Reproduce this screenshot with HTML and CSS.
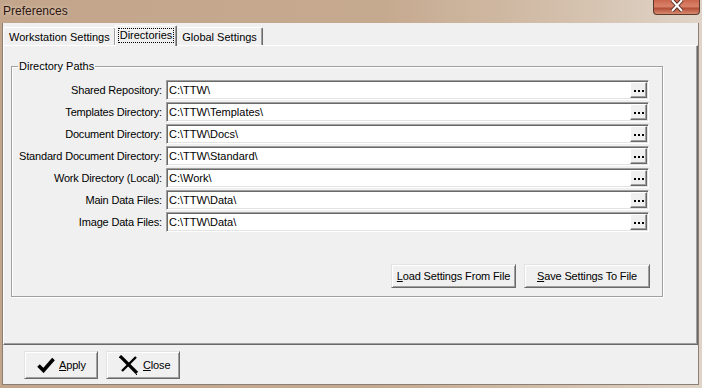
FILE: index.html
```html
<!DOCTYPE html>
<html lang="en">

<head>
    <meta charset="UTF-8">
    <title>Preferences</title>
    <link rel="stylesheet" href="styles.css">
</head>

<body>
    <div class="window">
        <div class="titlebar">
            <span class="title">Preferences</span>
            <div class="close-btn">
                <svg width="16" height="12" viewBox="0 0 16 12">
                    <path d="M3 0 L13 11 M13 0 L3 11" stroke="#5a3326" stroke-width="4" />
                    <path d="M3 0 L13 11 M13 0 L3 11" stroke="#fff" stroke-width="2" />
                </svg>
            </div>
        </div>

        <div class="client">
            <div class="tabs">
                <div class="tab">Workstation Settings</div>
                <div class="tab active"><span class="focus">Directories</span></div>
                <div class="tab">Global Settings</div>
            </div>

            <div class="page">
                <fieldset class="group">
                    <legend>Directory Paths</legend>

                    <div class="fields">
                        <label>Shared Repository:</label>
                        <div class="path-box"><input class="path" value="C:\TTW\"><button class="browse"><svg width="10" height="2"><rect x="0" width="2" height="2" /><rect x="4" width="2" height="2" /><rect x="8" width="2" height="2" /></svg></button></div>

                        <label>Templates Directory:</label>
                        <div class="path-box"><input class="path" value="C:\TTW\Templates\"><button class="browse"><svg width="10" height="2"><rect x="0" width="2" height="2" /><rect x="4" width="2" height="2" /><rect x="8" width="2" height="2" /></svg></button></div>

                        <label>Document Directory:</label>
                        <div class="path-box"><input class="path" value="C:\TTW\Docs\"><button class="browse"><svg width="10" height="2"><rect x="0" width="2" height="2" /><rect x="4" width="2" height="2" /><rect x="8" width="2" height="2" /></svg></button></div>

                        <label>Standard Document Directory:</label>
                        <div class="path-box"><input class="path" value="C:\TTW\Standard\"><button class="browse"><svg width="10" height="2"><rect x="0" width="2" height="2" /><rect x="4" width="2" height="2" /><rect x="8" width="2" height="2" /></svg></button></div>

                        <label>Work Directory (Local):</label>
                        <div class="path-box"><input class="path" value="C:\Work\"><button class="browse"><svg width="10" height="2"><rect x="0" width="2" height="2" /><rect x="4" width="2" height="2" /><rect x="8" width="2" height="2" /></svg></button></div>

                        <label>Main Data Files:</label>
                        <div class="path-box"><input class="path" value="C:\TTW\Data\"><button class="browse"><svg width="10" height="2"><rect x="0" width="2" height="2" /><rect x="4" width="2" height="2" /><rect x="8" width="2" height="2" /></svg></button></div>

                        <label>Image Data Files:</label>
                        <div class="path-box"><input class="path" value="C:\TTW\Data\"><button class="browse"><svg width="10" height="2"><rect x="0" width="2" height="2" /><rect x="4" width="2" height="2" /><rect x="8" width="2" height="2" /></svg></button></div>
                    </div>

                    <div class="actions">
                        <button class="btn load-btn"><u>L</u>oad Settings From File</button>
                        <button class="btn save-btn"><u>S</u>ave Settings To File</button>
                    </div>
                </fieldset>
            </div>

            <div class="footer">
                <button class="btn big-btn">
                    <svg width="18" height="16" viewBox="0 0 18 16">
                        <path d="M1.5 8.5 L6.5 13.5 L16.5 2" fill="none" stroke="#000" stroke-width="3.6" />
                    </svg>
                    <span><u>A</u>pply</span>
                </button>
                <button class="btn big-btn">
                    <svg width="20" height="20" viewBox="0 0 20 20">
                        <path d="M1 1 L18 18" stroke="#000" stroke-width="3.2" />
                        <path d="M17 2 L3 16" stroke="#000" stroke-width="2.4" />
                        <rect x="17" y="19" width="1" height="1" fill="#000" />
                    </svg>
                    <span><u>C</u>lose</span>
                </button>
            </div>
        </div>
    </div>
</body>

</html>
```

FILE: styles.css
```css
* {
    margin: 0;
    padding: 0;
    box-sizing: border-box;
}

html,
body {
    width: 702px;
    height: 388px;
    overflow: hidden;
    font-family: "Liberation Sans", Arial, sans-serif;
    font-size: 11px;
    color: #000;
}

.window {
    width: 702px;
    height: 388px;
    display: flex;
    flex-direction: column;
    background: linear-gradient(90deg, #c2a58b 0%, #c6aa90 55%, #d3bfab 80%, #e0d4c8 100%);
}

.titlebar {
    height: 23px;
    display: flex;
    justify-content: space-between;
    align-items: flex-start;
}

.titlebar .title {
    padding: 4px 0 0 3px;
    font-size: 12px;
    color: #2e1610;
    text-shadow: 0 0 4px rgba(255, 240, 225, .7);
}

.close-btn {
    width: 47px;
    height: 15px;
    margin-right: 2px;
    display: flex;
    justify-content: center;
    align-items: flex-start;
    border: 1px solid #5b3a2e;
    border-top: none;
    border-radius: 0 0 4px 4px;
    background: linear-gradient(180deg, #c9654c 0%, #d9836a 45%, #b4503a 60%, #d88a70 100%);
}

.client {
    flex: 1 1 auto;
    margin: 0 3px 3px 2px;
    border: 1px solid #8a7f74;
    border-top: none;
    display: flex;
    flex-direction: column;
    background-color: #f0f0f0;
}

.tabs {
    height: 22px;
    display: flex;
    align-items: flex-end;
    position: relative;
    z-index: 2;
}

.tab {
    height: 18px;
    padding: 0 5px;
    display: flex;
    align-items: center;
    background-color: #f0f0f0;
    border: 1px solid #fff;
    border-bottom: none;
    border-right-color: #696969;
    border-radius: 2px 2px 0 0;
    box-shadow: inset -1px 0 0 #a0a0a0;
    white-space: nowrap;
}

.tab.active {
    height: 21px;
    margin: 0 -1px -1px -1px;
    padding: 0 2px 1px 2px;
    position: relative;
    z-index: 3;
}

.tab .focus {
    padding: 1px 2px 2px 2px;
    outline: 1px dotted #000;
    outline-offset: -1px;
}

.page {
    height: 300px;
    padding: 14px 0 0 7px;
    border: 1px solid #fff;
    border-right-color: #696969;
    border-bottom-color: #696969;
    box-shadow: inset -1px -1px 0 #a0a0a0;
}

.group {
    width: 652px;
    height: 237px;
    padding: 0 12px 0 0;
    border: 1px solid #a0a0a0;
    box-shadow: inset 1px 1px 0 #fff, 1px 1px 0 #fff;
}

.group legend {
    margin-left: 6px;
    padding: 0 1px;
}

.fields {
    margin-top: 8px;
    display: grid;
    grid-template-columns: 150px 483px;
    column-gap: 4px;
    row-gap: 2px;
    align-items: center;
}

.fields label {
    text-align: right;
    white-space: nowrap;
    letter-spacing: -0.18px;
}

.path-box {
    height: 20px;
    display: flex;
    border: 1px solid;
    border-color: #a0a0a0 #fff #fff #a0a0a0;
    box-shadow: inset 1px 1px 0 #696969, inset -1px -1px 0 #e3e3e3;
    background-color: #fff;
    padding: 1px 1px 1px 1px;
}

.path {
    flex: 1 1 auto;
    min-width: 0;
    border: none;
    outline: none;
    background: transparent;
    font: inherit;
    color: #000;
    padding-left: 1px;
}

.browse {
    width: 17px;
    height: 16px;
    display: flex;
    align-items: center;
    justify-content: center;
    padding-top: 2px;
    background-color: #f0f0f0;
    border: 1px solid;
    border-color: #fff #696969 #696969 #fff;
    box-shadow: inset -1px -1px 0 #a0a0a0;
}

.actions {
    margin-top: 32px;
    display: flex;
    justify-content: flex-end;
    gap: 8px;
}

.btn {
    height: 24px;
    display: flex;
    align-items: center;
    justify-content: center;
    font: inherit;
    color: #000;
    letter-spacing: -0.15px;
    background-color: #f0f0f0;
    border: 1px solid;
    border-color: #e3e3e3 #696969 #696969 #e3e3e3;
    box-shadow: inset 1px 1px 0 #fff, inset -1px -1px 0 #a0a0a0;
}

.load-btn {
    width: 125px;
}

.save-btn {
    width: 126px;
}

.footer {
    flex: 1 1 auto;
    display: flex;
    align-items: flex-start;
    gap: 8px;
    padding: 6px 0 0 21px;
}

.big-btn {
    width: 74px;
    height: 28px;
    justify-content: flex-start;
    padding-left: 12px;
    gap: 4px;
}
```
